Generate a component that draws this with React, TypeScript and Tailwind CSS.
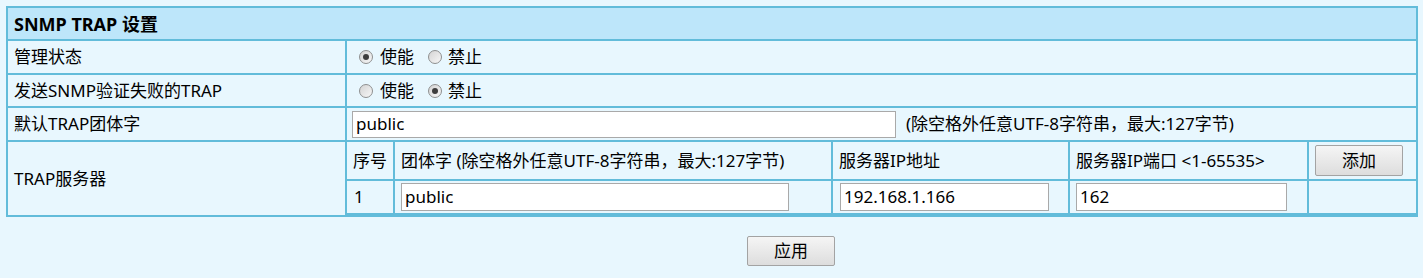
import React from "react";

function Radio({ checked }: { checked: boolean }) {
  return (
    <span className="relative inline-flex h-[14px] w-[14px] shrink-0 items-center justify-center rounded-full border border-[#8e8f8f] bg-gradient-to-br from-[#d4d4d4] to-[#f7f7f7]">
      {checked && <span className="h-[6px] w-[6px] rounded-full bg-[#3d3d3d]" />}
    </span>
  );
}

function RadioPair({ enabled }: { enabled: boolean }) {
  return (
    <div className="flex items-center pl-[12px]">
      <Radio checked={enabled} />
      <span className="ml-[7px]">使能</span>
      <span className="ml-[14px] flex items-center">
        <Radio checked={!enabled} />
      </span>
      <span className="ml-[6px]">禁止</span>
    </div>
  );
}

function TextBox({ value, w }: { value: string; w: string }) {
  return (
    <div className={`flex h-[28px] items-center border border-[#a9a9a9] bg-white px-[3px] ${w}`}>
      {value}
    </div>
  );
}

function Btn({ label }: { label: string }) {
  return (
    <div className="flex h-[31px] w-[88px] items-center justify-center rounded-[2px] border border-[#a3a3a3] bg-gradient-to-b from-[#f5f5f5] to-[#dddddd]">
      {label}
    </div>
  );
}

export default function App() {
  const cell = "bg-[#e8f7fe] flex items-center";
  return (
    <div className="min-h-[278px] bg-[#e8f7fe] pl-[6px] pr-[5px] pt-[6px] font-['Noto_Sans','Noto_Sans_CJK_SC',sans-serif] text-[17px] leading-[22px] text-black">
      <div className="grid grid-cols-[337px_1fr] gap-[2px] bg-[#62bcda] p-[2px]">
        <div className="col-span-2 flex h-[31px] items-center bg-[#bde6fa] px-[6px] text-[18px] font-bold">
          SNMP TRAP 设置
        </div>

        <div className={`${cell} h-[32px] px-[6px]`}>管理状态</div>
        <div className={`${cell}`}>
          <RadioPair enabled={true} />
        </div>

        <div className={`${cell} h-[31px] px-[6px]`}>发送SNMP验证失败的TRAP</div>
        <div className={`${cell}`}>
          <RadioPair enabled={false} />
        </div>

        <div className={`${cell} h-[32px] px-[6px]`}>默认TRAP团体字</div>
        <div className={`${cell} pl-[5px]`}>
          <div className="flex h-[27px] w-[544px] items-center border border-[#a9a9a9] bg-white px-[3px]">
            public
          </div>
          <span className="ml-[10px]">(除空格外任意UTF-8字符串，最大:127字节)</span>
        </div>

        <div className={`${cell} h-[73px] px-[6px]`}>TRAP服务器</div>
        <div className="grid grid-cols-[46px_436px_235px_237px_1fr] grid-rows-[37px_32px] gap-[2px] border-b-2 border-[#62bcda] bg-[#62bcda]">
          <div className={`${cell} px-[6px]`}>序号</div>
          <div className={`${cell} px-[6px]`}>团体字 (除空格外任意UTF-8字符串，最大:127字节)</div>
          <div className={`${cell} px-[6px]`}>服务器IP地址</div>
          <div className={`${cell} px-[6px]`}>服务器IP端口 &lt;1-65535&gt;</div>
          <div className={`${cell} px-[6px]`}>
            <Btn label="添加" />
          </div>

          <div className={`${cell} px-[7px]`}>1</div>
          <div className={`${cell} px-[6px]`}>
            <TextBox value="public" w="w-[388px]" />
          </div>
          <div className={`${cell} px-[7px]`}>
            <TextBox value="192.168.1.166" w="w-[209px]" />
          </div>
          <div className={`${cell} px-[6px]`}>
            <TextBox value="162" w="w-[211px]" />
          </div>
          <div className={`${cell}`} />
        </div>
      </div>

      <div className="mt-[19px] pl-[741px]">
        <div className="flex h-[30px] w-[88px] items-center justify-center rounded-[2px] border border-[#a3a3a3] bg-gradient-to-b from-[#f5f5f5] to-[#dddddd]">
          应用
        </div>
      </div>
    </div>
  );
}
